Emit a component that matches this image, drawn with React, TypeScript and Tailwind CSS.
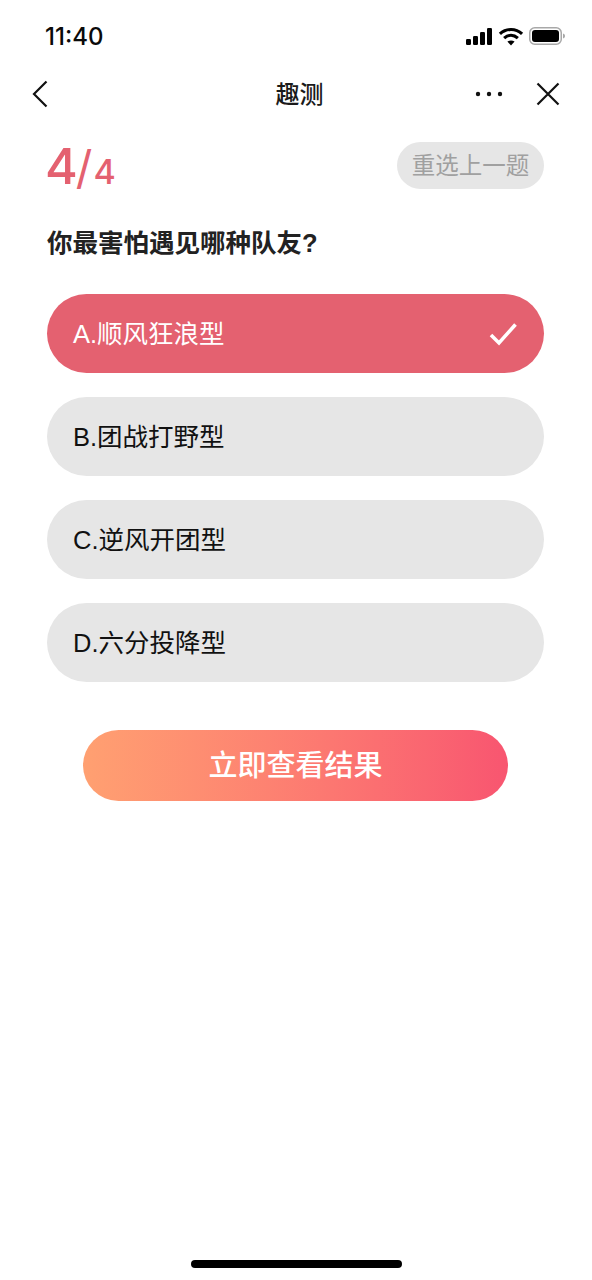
import React from "react";

const font = "font-['Liberation_Sans','Noto_Sans_CJK_SC',sans-serif]";

const options = [
  { label: "A.顺风狂浪型", selected: true },
  { label: "B.团战打野型", selected: false },
  { label: "C.逆风开团型", selected: false },
  { label: "D.六分投降型", selected: false },
];

const StatusBar = () => (
  <div className="flex h-[72px] items-center justify-between pl-[45px] pr-[26px]">
    <span className="pt-[1px] font-['Inter',sans-serif] text-[24px] font-medium leading-none text-[#0a0a0a]">11:40</span>
    <div className="flex items-center gap-[5px]">
      <svg width="27" height="17" viewBox="0 0 27 17" fill="#000">
        <rect x="0" y="11" width="5" height="6" rx="1.2" />
        <rect x="7" y="8" width="5" height="9" rx="1.2" />
        <rect x="14" y="4" width="5" height="13" rx="1.2" />
        <rect x="21" y="0" width="5" height="17" rx="1.2" />
      </svg>
      <svg width="26" height="19" viewBox="0 0 24 18" fill="none" stroke="#000" strokeWidth="3">
        <path d="M1.5 6.5C7.5 1 16.5 1 22.5 6.5" />
        <path d="M5.5 10.5C9.5 7 14.5 7 18.5 10.5" />
        <path d="M12 17.5L8.6 13.8C10.6 12.3 13.4 12.3 15.4 13.8Z" fill="#000" stroke="none" />
      </svg>
      <svg width="37" height="18" viewBox="0 0 37 18" fill="none">
        <rect x="0.75" y="0.75" width="31.5" height="16.5" rx="5" stroke="#a8a8a8" strokeWidth="1.5" />
        <rect x="3" y="3" width="27" height="12" rx="3" fill="#000" />
        <path d="M34 6.5C35.5 7 36 8 36 9C36 10 35.5 11 34 11.5Z" fill="#a8a8a8" />
      </svg>
    </div>
  </div>
);

const NavBar = () => (
  <div className="relative flex h-[44px] items-center justify-between pl-[31px] pr-[32px]">
    <svg width="18" height="28" viewBox="0 0 18 28" fill="none" stroke="#111" strokeWidth="2.2">
      <path d="M15.5 1.5L3 14L15.5 26.5" />
    </svg>
    <span className="absolute left-[7px] right-0 pt-[2px] text-center text-[24px] font-medium leading-none text-[#1a1a1a]">趣测</span>
    <div className="flex items-center gap-[33px]">
      <svg width="28" height="6" viewBox="0 0 28 6" fill="#111">
        <circle cx="3" cy="3" r="2.2" />
        <circle cx="14" cy="3" r="2.2" />
        <circle cx="25" cy="3" r="2.2" />
      </svg>
      <svg width="24" height="24" viewBox="0 0 24 24" fill="none" stroke="#111" strokeWidth="2.2">
        <path d="M1.5 1.5L22.5 22.5M22.5 1.5L1.5 22.5" />
      </svg>
    </div>
  </div>
);

export default function App() {
  return (
    <div className={`${font} flex h-[1280px] w-[592px] flex-col overflow-hidden bg-white`}>
      <StatusBar />
      <NavBar />
      <div className="flex flex-col pl-[47px] pr-[48px] pt-[26px]">
        <div className="flex h-[47px] items-center justify-between">
          <div className="flex items-baseline font-['Inter',sans-serif] text-[#e46170]">
            <span className="ml-[-2px] text-[50px] font-medium leading-none">4</span>
            <span className="ml-[-2px] text-[46px] leading-none">/</span>
            <span className="ml-[1px] text-[34px] font-medium leading-none">4</span>
          </div>
          <div className="flex h-[47px] w-[147px] items-center justify-center rounded-full bg-[#e6e6e6] pt-[2px] text-[23.5px] text-[#a0a0a0]">
            重选上一题
          </div>
        </div>
        <h1 className="mt-[37px] text-[25.5px] font-bold leading-[34px] text-[#222]">你最害怕遇见哪种队友?</h1>
        <div className="mt-[34px] flex flex-col gap-[24px]">
          {options.map((option) => (
            <div
              key={option.label}
              className={
                option.selected
                  ? "flex h-[79px] items-center justify-between rounded-full bg-[#e46170] px-[26px] text-[25.5px] text-white"
                  : "flex h-[79px] items-center justify-between rounded-full bg-[#e6e6e6] px-[26px] text-[25.5px] text-[#111]"
              }
            >
              <span className="pt-[2px]">{option.label}</span>
              {option.selected && (
                <svg width="30" height="24" viewBox="0 0 30 24" fill="none" stroke="#fff" strokeWidth="3.6" className="ml-[1px]">
                  <path d="M3 13L11 21L27.5 2.5" />
                </svg>
              )}
            </div>
          ))}
        </div>
        <div className="mx-[36px] mt-[48px] flex h-[71px] items-center justify-center rounded-full bg-gradient-to-r from-[#ffa071] to-[#f85570] pt-[2px] text-[29px] font-medium text-white">
          立即查看结果
        </div>
      </div>
      <div className="mt-auto mb-[12px] h-[8px] w-[211px] self-center rounded-full bg-black" />
    </div>
  );
}
